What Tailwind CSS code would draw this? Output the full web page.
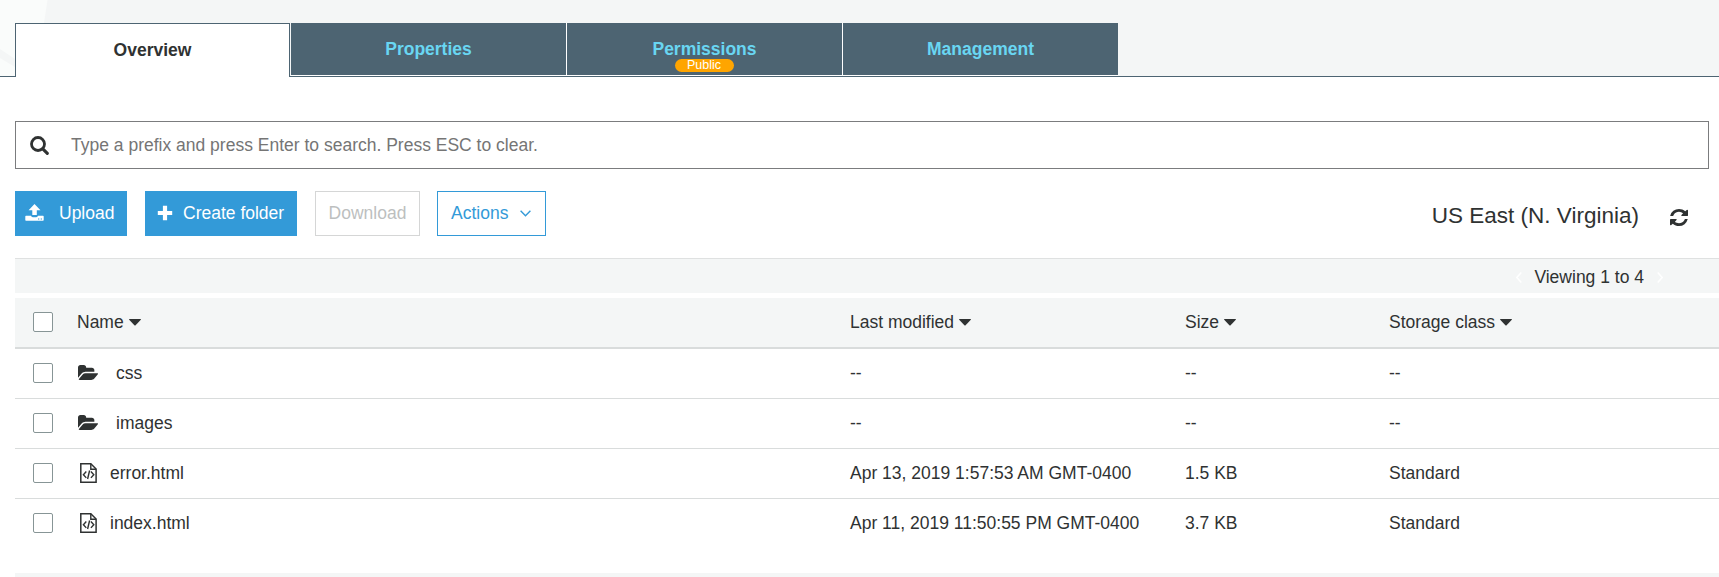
<!DOCTYPE html>
<html lang="en">
<head>
<meta charset="utf-8">
<title>Bucket overview</title>
<script src="https://cdn.jsdelivr.net/npm/@tailwindcss/browser@4"></script>
</head>
<body class="bg-white text-[#2f3232] text-[17.5px] leading-[20px] font-['Liberation_Sans',Arial,sans-serif] overflow-hidden h-[577px] flex flex-col">
<svg class="hidden">
  <symbol id="caret" viewBox="0 0 12 7"><path d="M.6 0h10.8q.9.1.4.8L6.6 6.200q-.6.6-1.200 0L.2.8Q-.3.1.6 0z" fill="currentColor"/></symbol>
  <symbol id="folder" viewBox="64 128 1879 1408"><path fill="currentColor" d="M1943 952q0 31-31 66l-336 396q-43 51-120.5 86.5t-143.5 35.5h-1088q-34 0-60.5-13t-26.5-43q0-31 31-66l336-396q43-51 120.5-86.5t143.5-35.5h1088q34 0 60.5 13t26.5 43zm-343-344v160h-832q-94 0-197 47.5t-164 119.5l-337 396-5 6q0-4-.5-12.5t-.5-12.5v-960q0-92 66-158t158-66h320q92 0 158 66t66 158v32h544q92 0 158 66t66 158z"/></symbol>
  <symbol id="code" viewBox="0 0 17 20"><g fill="none" stroke="currentColor"><path d="M.8.8h10l5.300 5.200v13.200H.8z" stroke-width="1.500"/><path d="M10.800.8v5.400h5.300" stroke-width="1.400"/><path d="M6.300 8.500 3.400 11.700l2.900 3.200M10.900 8.500l2.900 3.200-2.900 3.200M9.600 7.500l-2 8.500" stroke-width="1.400"/></g></symbol>
</svg>

<header class="relative h-[77px] shrink-0 bg-[#f4f6f6] border-b border-[#4d6472]">
  <svg class="absolute left-0 top-0" width="48" height="76"><path d="M0 0h47.500l-3.500 23v53H0z" fill="#fafcfb"/><path d="M0 49l15 10v8L0 58z" fill="#f4f6f6"/></svg>
  <nav class="relative flex pl-[15px] pt-[23px] gap-px font-bold text-center text-[#69d6f2]">
    <div class="h-[54px] w-[275px] bg-white border border-b-0 border-[#4d6472] text-[#2f3232] pt-[16px]">Overview</div>
    <div class="flex gap-px bg-white h-[53px] pb-px">
      <div class="w-[275px] bg-[#4d6472] pt-[16px]">Properties</div>
      <div class="w-[275px] bg-[#4d6472] pt-[16px] flex flex-col items-center">
        <span>Permissions</span>
        <span class="w-[59px] h-[13px] rounded-[7px] bg-[#ffa500] text-white font-normal text-[12.5px] leading-[12px] pr-px">Public</span>
      </div>
      <div class="w-[275px] bg-[#4d6472] pt-[16px]">Management</div>
    </div>
  </nav>
</header>

<main class="pl-[15px] flex flex-col">
  <div class="mt-[44px] mr-[10px] h-[48px] border border-[#7b7c7e] flex items-center pl-[14px]">
    <svg class="w-[19px] h-[19px]" viewBox="0 0 19 19"><g fill="none" stroke="#2f3232"><circle cx="8" cy="8" r="6.500" stroke-width="2.800"/><path d="M12.800 12.800l4.500 4.500" stroke-width="3.100" stroke-linecap="round"/></g></svg>
    <span class="ml-[22px] text-[#757575]">Type a prefix and press Enter to search. Press ESC to clear.</span>
  </div>

  <div class="mt-[22px] h-[45px] flex">
    <button class="w-[112px] bg-[#339ad8] text-white flex items-center pl-[10px] pb-[2px]">
      <svg class="w-[19px] h-[17px]" viewBox="0 0 19 17"><path fill="currentColor" fill-rule="evenodd" d="M9.500 0l6 6.200h-3.700v4.800H7.300V6.200H3.600zM1 11.800h5q.4 1.400 1.800 1.400h3.400q1.400 0 1.800-1.400h5q.7 0 .7.7v3.500q0 .8-.7.8H1q-.7 0-.7-.8v-3.500q0-.7.7-.7zM13 14.400v1.200h1.300v-1.200zM15.700 14.400v1.200H17v-1.200z"/></svg>
      <span class="ml-[15px]">Upload</span>
    </button>
    <button class="ml-[18px] w-[152px] bg-[#339ad8] text-white flex items-center pl-[12px] pb-[2px]">
      <svg class="w-[16px] h-[16px]" viewBox="0 0 16 16"><path d="M8 .8v14.400M.8 8h14.400" stroke="currentColor" stroke-width="4.200" stroke-linejoin="round"/></svg>
      <span class="ml-[10px]">Create folder</span>
    </button>
    <button class="ml-[18px] w-[105px] border border-[#d5d6d6] text-[#bdbfbf] flex items-center justify-center pb-[2px]">Download</button>
    <button class="ml-[17px] w-[109px] border border-[#339ad8] text-[#339ad8] flex items-center pl-[13px] pb-[2px]">Actions
      <svg class="ml-[12px] mt-[2px] w-[11px] h-[7px]" viewBox="0 0 11 7"><path d="M.6.7l4.900 5 4.900-5" fill="none" stroke="currentColor" stroke-width="1.400"/></svg>
    </button>
    <span class="ml-auto mt-[12px] text-[22.5px] leading-[26px]">US East (N. Virginia)</span>
    <svg class="ml-[31px] mr-[31px] mt-[18px] w-[18px] h-[17px]" viewBox="128 128 1536 1536" preserveAspectRatio="none"><path fill="#2f3232" d="M1639 1056q0 5-1 7-64 268-268 434.500t-478 166.500q-146 0-282.500-55t-243.500-157l-129 129q-19 19-45 19t-45-19-19-45v-448q0-26 19-45t45-19h448q26 0 45 19t19 45-19 45l-137 137q71 66 161 102t187 36q134 0 250-65t186-179q11-17 53-117 8-23 30-23h192q13 0 22.500 9.500t9.500 22.500zm25-800v448q0 26-19 45t-45 19h-448q-26 0-45-19t-19-45 19-45l138-138q-148-137-349-137-134 0-250 65t-186 179q-11 17-53 117-8 23-30 23h-199q-13 0-22.500-9.500t-9.500-22.500v-7q65-268 270-434.500t480-166.500q146 0 284 55.500t245 156.500l130-129q19-19 45-19t45 19 19 45z"/></svg>
  </div>

  <div class="mt-[22px] h-[35px] bg-[#f4f6f6] border-t border-[#dfe1e1] flex items-center justify-end pr-[56px] pt-px">
    <svg class="mt-[2px] w-[6px] h-[11px]" viewBox="0 0 6 11"><path d="M5.300.5.800 5.500l4.500 5" fill="none" stroke="#fff" stroke-width="1.500"/></svg>
    <span class="ml-[12px] mr-[13px]">Viewing 1 to 4</span>
    <svg class="mt-[2px] w-[6px] h-[11px]" viewBox="0 0 6 11"><path d="M.7.500l4.500 5-4.500 5" fill="none" stroke="#fff" stroke-width="1.500"/></svg>
  </div>

  <div class="mt-[5px] h-[51px] pb-[2px] bg-[#f4f6f6] border-b-2 border-[#d9dcdc] grid grid-cols-[62px_773px_335px_204px_1fr] items-center">
    <i class="ml-[18px] mt-px size-[20px] rounded-[2px] border border-[#879596] bg-white"></i>
    <span class="flex items-center gap-[5px]">Name <svg class="mt-px w-[12px] h-[7px]"><use href="#caret"/></svg></span>
    <span class="flex items-center gap-[5px]">Last modified <svg class="mt-px w-[12px] h-[7px]"><use href="#caret"/></svg></span>
    <span class="flex items-center gap-[5px]">Size <svg class="mt-px w-[12px] h-[7px]"><use href="#caret"/></svg></span>
    <span class="flex items-center gap-[5px]">Storage class <svg class="mt-px w-[12px] h-[7px]"><use href="#caret"/></svg></span>
  </div>

  <div class="h-[50px] pb-[2px] border-b border-[#d9dcdc] grid grid-cols-[62px_773px_335px_204px_1fr] items-center">
    <i class="ml-[18px] size-[20px] rounded-[2px] border border-[#879596]"></i>
    <span class="flex items-center"><svg class="w-[20px] h-[15px] ml-px mr-[18px]"><use href="#folder"/></svg>css</span>
    <span>--</span><span>--</span><span>--</span>
  </div>
  <div class="h-[50px] pb-[2px] border-b border-[#d9dcdc] grid grid-cols-[62px_773px_335px_204px_1fr] items-center">
    <i class="ml-[18px] size-[20px] rounded-[2px] border border-[#879596]"></i>
    <span class="flex items-center"><svg class="w-[20px] h-[15px] ml-px mr-[18px]"><use href="#folder"/></svg>images</span>
    <span>--</span><span>--</span><span>--</span>
  </div>
  <div class="h-[50px] pb-[2px] border-b border-[#d9dcdc] grid grid-cols-[62px_773px_335px_204px_1fr] items-center">
    <i class="ml-[18px] size-[20px] rounded-[2px] border border-[#879596]"></i>
    <span class="flex items-center"><svg class="w-[17px] h-[20px] ml-[2.5px] mr-[13.5px]"><use href="#code"/></svg>error.html</span>
    <span>Apr 13, 2019 1:57:53 AM GMT-0400</span><span>1.5 KB</span><span>Standard</span>
  </div>
  <div class="h-[50px] pb-[2px] border-b border-transparent grid grid-cols-[62px_773px_335px_204px_1fr] items-center">
    <i class="ml-[18px] size-[20px] rounded-[2px] border border-[#879596]"></i>
    <span class="flex items-center"><svg class="w-[17px] h-[20px] ml-[2.5px] mr-[13.5px]"><use href="#code"/></svg>index.html</span>
    <span>Apr 11, 2019 11:50:55 PM GMT-0400</span><span>3.7 KB</span><span>Standard</span>
  </div>
  <div class="mt-[24px] h-[4px] bg-[#f4f6f6]"></div>
</main>
</body>
</html>
